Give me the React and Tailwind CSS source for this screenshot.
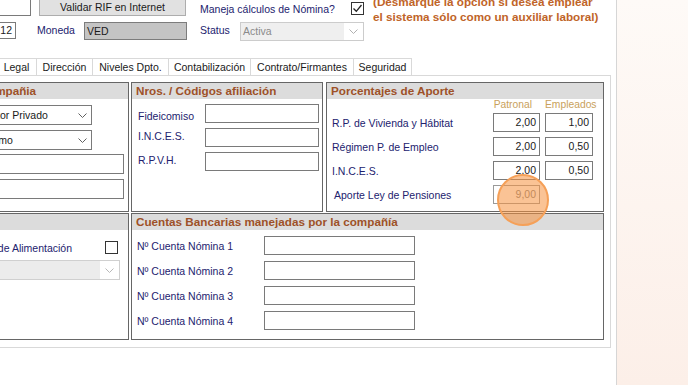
import React from "react";

const Chevron = ({ color = "#606060" }) => (
  <svg width="9" height="5" viewBox="0 0 9 5" fill="none">
    <path d="M0.5 0.5 L4.5 4.5 L8.5 0.5" stroke={color} strokeWidth="1" />
  </svg>
);

const CheckBox = ({ checked }) => (
  <div className="w-[13px] h-[13px] border border-[#333333] bg-white flex items-center justify-center">
    {checked && (
      <svg width="11" height="11" viewBox="0 0 11 11" fill="none">
        <path d="M1.5 5.5 L4.3 8.3 L9.5 2" stroke="#222222" strokeWidth="1.3" />
      </svg>
    )}
  </div>
);

const Box = ({ className = "", children }) => (
  <div className={"border border-[#7a7a7a] bg-white " + className}>{children}</div>
);

const GroupHeader = ({ children }) => (
  <div className="h-[16px] bg-[#dcdcdc] pl-[4px] font-bold text-[11.7px] leading-[16px] text-[#9e5128] whitespace-nowrap overflow-hidden">
    {children}
  </div>
);

const tabs = [
  ["Legal", "w-[40px]"],
  ["Dirección", "w-[56px]"],
  ["Niveles Dpto.", "w-[76px]"],
  ["Contabilización", "w-[82px]"],
  ["Contrato/Firmantes", "w-[103px]"],
  ["Seguridad", "w-[58px]"],
];

const aporte = [
  ["R.P. de Vivienda y Hábitat", "2,00", "1,00"],
  ["Régimen P. de Empleo", "2,00", "0,50"],
  ["I.N.C.E.S.", "2,00", "0,50"],
];

export default function App() {
  return (
    <div className="w-[688px] h-[385px] overflow-hidden flex bg-white font-['Liberation_Sans',Arial,sans-serif] text-[10.5px] text-[#22226e]">
      <div className="w-[616px] h-full relative overflow-hidden shrink-0">
        {/* Row 1 */}
        <div className="flex items-start h-[22px]">
          <Box className="-mt-[3px] -ml-[9px] w-[40px] h-[19px] shrink-0" />
          <div className="-mt-[3px] ml-[8px] w-[147px] h-[19px] shrink-0 border border-[#adadad] bg-[#e1e1e1] flex items-center justify-center pt-[2px] text-[#1a1a1a] whitespace-nowrap">
            Validar RIF en Internet
          </div>
          <div className="ml-[14px] w-[151px] shrink-0 mt-[2px] leading-[14px] whitespace-nowrap">
            Maneja cálculos de Nómina?
          </div>
          <div className="mt-[2px] shrink-0">
            <CheckBox checked />
          </div>
          <div className="ml-[9px] -mt-[6px] leading-[15px] font-bold text-[11.7px] text-[#bf6428] whitespace-nowrap">
            (Desmarque la opción si desea emplear
            <br />
            el sistema sólo como un auxiliar laboral)
          </div>
        </div>

        {/* Row 2 */}
        <div className="flex items-start h-[36px]">
          <Box className="-ml-[10px] w-[26px] h-[17px] shrink-0 text-right pr-[3px] leading-[15px] text-[#1a1a1a]">12</Box>
          <div className="ml-[21px] w-[47px] shrink-0 mt-[1px] leading-[14px]">Moneda</div>
          <div className="w-[103px] h-[18px] shrink-0 border border-[#7c7c7c] bg-[#c4c4c4] pl-[2px] leading-[16px] text-[#1a1a1a]">
            VED
          </div>
          <div className="ml-[13px] w-[40px] shrink-0 mt-[1px] leading-[14px]">Status</div>
          <div className="w-[124px] h-[19px] shrink-0 border border-[#cccccc] bg-white flex">
            <div className="flex-1 bg-[#efefef] pl-[2px] leading-[17px] text-[#8a8a8a]">Activa</div>
            <div className="w-[19px] flex items-center justify-center">
              <Chevron color="#b0b0b0" />
            </div>
          </div>
        </div>

        {/* Tabs */}
        <div className="flex h-[17px] -ml-[3px] text-[#1a1a1a]">
          {tabs.map(([t, w]) => (
            <div
              key={t}
              className={w + " shrink-0 border-t border-r border-[#d9d9d9] bg-white flex items-center justify-center whitespace-nowrap leading-[14px]"}
            >
              {t}
            </div>
          ))}
        </div>

        {/* Tab page */}
        <div className="-ml-[76px] w-[687px] h-[273px] border border-[#d9d9d9] pt-[6px] pl-[5px] pr-[6px] flex flex-col">
          {/* Top row */}
          <div className="flex h-[130px]">
            {/* Compañia */}
            <div className="w-[199px] shrink-0 border border-[#666666] flex flex-col items-end">
              <div className="w-full">
                <GroupHeader>Tipo de Compañia</GroupHeader>
              </div>
              <Box className="mt-[6px] mr-[36px] w-[116px] h-[20px] flex">
                <div className="flex-1 pl-[2px] leading-[18px] text-[#1a1a1a] whitespace-nowrap">Sector Privado</div>
                <div className="w-[17px] flex items-center justify-center">
                  <Chevron />
                </div>
              </Box>
              <Box className="mt-[5px] mr-[36px] w-[116px] h-[20px] flex">
                <div className="flex-1 -ml-[3px] pl-[2px] leading-[18px] text-[#1a1a1a] whitespace-nowrap">Máximo</div>
                <div className="w-[17px] flex items-center justify-center">
                  <Chevron />
                </div>
              </Box>
              <Box className="mt-[4px] mr-[4px] w-[148px] h-[20px]" />
              <Box className="mt-[5px] mr-[4px] w-[148px] h-[20px]" />
            </div>

            {/* Nros */}
            <div className="ml-[2px] w-[192px] shrink-0 border border-[#666666] flex flex-col">
              <GroupHeader>Nros. / Códigos afiliación</GroupHeader>
              <div className="pt-[5px] flex flex-col gap-[5px]">
                {[
                  ["Fideicomiso", "mt-[4px]"],
                  ["I.N.C.E.S.", "-mt-[3px]"],
                  ["R.P.V.H.", "-mt-[3px]"],
                ].map(([l, m]) => (
                  <div key={l} className="flex items-center h-[19px]">
                    <div className={"w-[73px] shrink-0 pl-[6px] leading-[14px] whitespace-nowrap " + m}>{l}</div>
                    <Box className="w-[114px] h-[19px] shrink-0" />
                  </div>
                ))}
              </div>
            </div>

            {/* Porcentajes */}
            <div className="ml-[3px] w-[278px] shrink-0 border border-[#666666] flex flex-col">
              <GroupHeader>Porcentajes de Aporte</GroupHeader>
              <div className="flex h-[12px] leading-[12px] text-[10.3px] text-[#c9a15c]">
                <div className="w-[166px] shrink-0" />
                <div className="w-[47px] shrink-0 text-right pr-[8px]">Patronal</div>
                <div className="ml-[5px] w-[53px] shrink-0 whitespace-nowrap">Empleados</div>
              </div>
              <div className="mt-[2px] flex flex-col gap-[5px]">
                {aporte.map(([l, a, b]) => (
                  <div key={l} className="flex items-center h-[19px]">
                    <div className="w-[166px] shrink-0 pl-[5px] leading-[14px] whitespace-nowrap">{l}</div>
                    <Box className="w-[47px] h-[19px] shrink-0 text-right pr-[3px] leading-[17px] text-[#1a1a1a]">{a}</Box>
                    <Box className="ml-[5px] w-[48px] h-[19px] shrink-0 text-right pr-[3px] leading-[17px] text-[#1a1a1a]">{b}</Box>
                  </div>
                ))}
                <div className="flex items-center h-[19px]">
                  <div className="w-[166px] shrink-0 pl-[7px] leading-[14px] whitespace-nowrap">Aporte Ley de Pensiones</div>
                  <div className="w-[47px] h-[19px] shrink-0 border border-[#9a9a9a] bg-white text-right pr-[3px] leading-[17px] text-[#808080]">
                    9,00
                  </div>
                </div>
              </div>
            </div>
          </div>

          {/* Bottom row */}
          <div className="mt-[1px] flex h-[127px]">
            <div className="w-[199px] shrink-0 border border-[#666666] flex flex-col">
              <GroupHeader>Otros</GroupHeader>
              <div className="mt-[10px] h-[14px] flex items-center justify-end pr-[10px]">
                <div className="mr-[33px] leading-[14px] whitespace-nowrap mt-[1px]">Bono de Alimentación</div>
                <CheckBox />
              </div>
              <div className="mt-[6px] self-end mr-[8px] w-[140px] h-[20px] border border-[#d0d0d0] bg-white flex">
                <div className="flex-1 bg-[#ececec]" />
                <div className="w-[19px] flex items-center justify-center">
                  <Chevron color="#b8b8b8" />
                </div>
              </div>
            </div>

            <div className="ml-[2px] w-[473px] shrink-0 border border-[#666666] flex flex-col">
              <GroupHeader>Cuentas Bancarias manejadas por la compañía</GroupHeader>
              <div className="pt-[6px] flex flex-col gap-[6px]">
                {[1, 2, 3, 4].map((n) => (
                  <div key={n} className="flex items-center h-[19px]">
                    <div className="w-[132px] shrink-0 pl-[5px] leading-[14px] whitespace-nowrap">Nº Cuenta Nómina {n}</div>
                    <Box className="w-[151px] h-[19px] shrink-0" />
                  </div>
                ))}
              </div>
            </div>
          </div>
        </div>

        {/* Click highlight */}
        <div className="absolute left-[497px] top-[174px] w-[52px] h-[52px] rounded-full bg-[rgba(246,146,62,0.55)] border-2 border-[#f5a058]" />
      </div>
      <div className="flex-1 border-l border-[#d6d6d6] bg-linear-to-b from-[#fefaf7] to-[#fcefe8]" />
    </div>
  );
}
